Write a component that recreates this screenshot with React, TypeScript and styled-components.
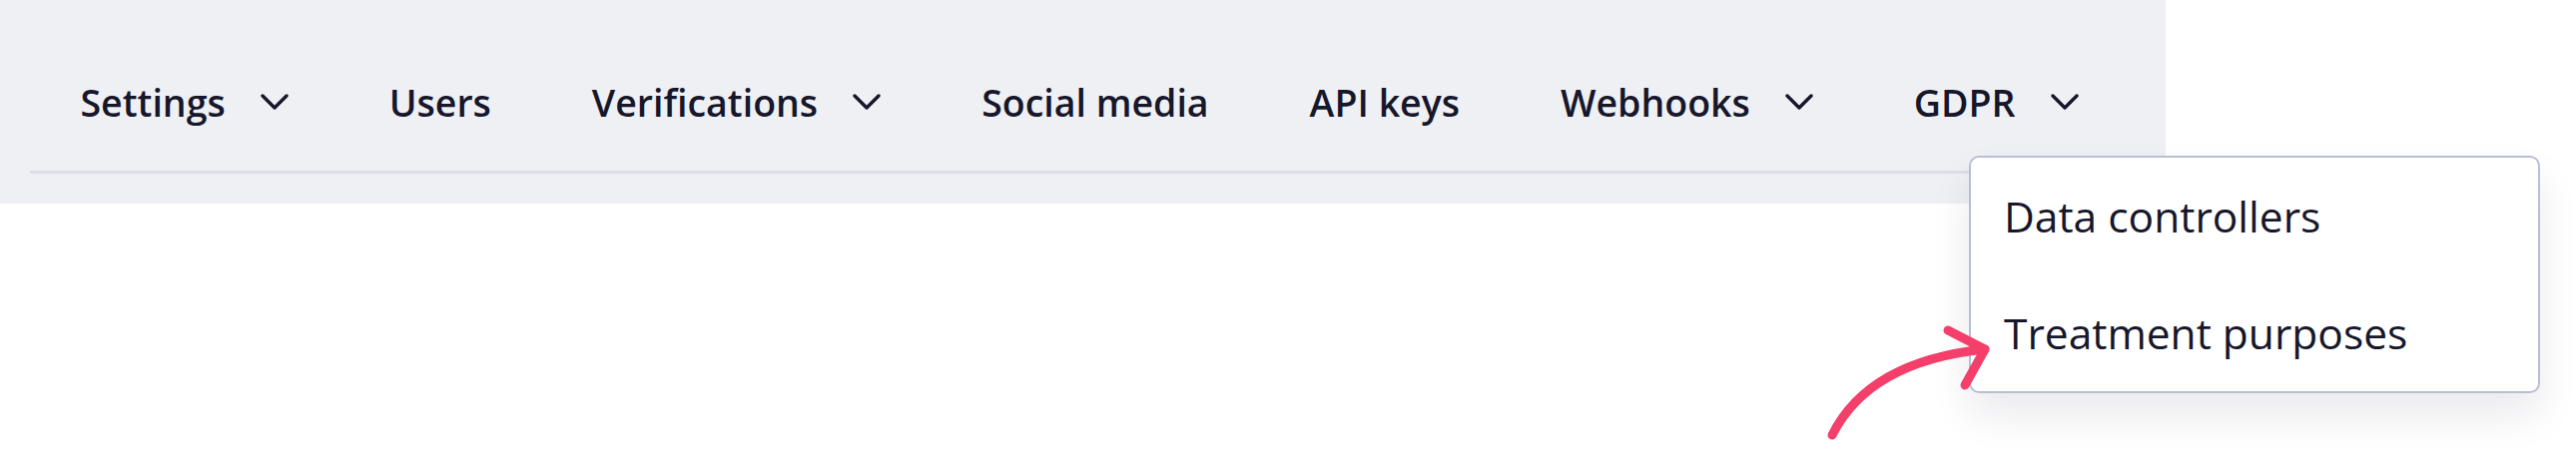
import React from "react";
import styled, { createGlobalStyle } from "styled-components";

const GlobalStyle = createGlobalStyle`
  html, body {
    margin: 0;
    padding: 0;
    background: #ffffff;
  }
  body {
    font-family: "Open Sans", "Noto Sans", sans-serif;
    color: #17172b;
  }
`;

const Page = styled.div`
  position: relative;
  width: 2580px;
  height: 468px;
  overflow: hidden;
`;

const Panel = styled.div`
  width: 2169px;
  box-sizing: border-box;
  background: #eff0f4;
  padding: 60px 30px 30px;
`;

const Nav = styled.nav`
  display: flex;
  align-items: center;
  height: 84px;
`;

const NavItem = styled.div`
  display: flex;
  align-items: center;
  gap: 35px;
  padding: 0 50.5px;
  font-size: 37.5px;
  font-weight: 600;
  white-space: nowrap;
  cursor: pointer;
`;

const Divider = styled.div`
  margin-top: 27px;
  height: 3px;
  background: #dddde9;
`;

const Dropdown = styled.div`
  position: absolute;
  left: 1972px;
  top: 156px;
  width: 572px;
  box-sizing: border-box;
  background: #ffffff;
  border: 2px solid #b8bfd5;
  border-radius: 10px;
  box-shadow: 0 22px 40px rgba(20, 20, 50, 0.09);
`;

const MenuItem = styled.div`
  display: flex;
  align-items: center;
  height: 117px;
  padding-left: 33px;
  font-size: 42.5px;
  font-weight: 400;
  white-space: nowrap;
`;

const Pointer = styled.svg`
  position: absolute;
  left: 1820px;
  top: 310px;
`;

const Chevron = () => (
  <svg width="28" height="17" viewBox="0 0 28 17" fill="none">
    <polyline
      points="2,2 14,14 26,2"
      stroke="#17172b"
      strokeWidth="3.4"
      strokeLinecap="round"
      strokeLinejoin="round"
    />
  </svg>
);

const items = [
  { label: "Settings", menu: true },
  { label: "Users", menu: false },
  { label: "Verifications", menu: true },
  { label: "Social media", menu: false },
  { label: "API keys", menu: false },
  { label: "Webhooks", menu: true },
  { label: "GDPR", menu: true },
];

export default function App() {
  return (
    <Page>
      <GlobalStyle />
      <Panel>
        <Nav>
          {items.map((it) => (
            <NavItem key={it.label}>
              {it.label}
              {it.menu && <Chevron />}
            </NavItem>
          ))}
        </Nav>
        <Divider />
      </Panel>
      <Dropdown>
        <MenuItem>Data controllers</MenuItem>
        <MenuItem>Treatment purposes</MenuItem>
      </Dropdown>
      <Pointer width="180" height="140" viewBox="0 0 180 140">
        <path
          d="M15 126 Q 52 52 168 40"
          stroke="#f43f6a"
          strokeWidth="9"
          fill="none"
          strokeLinecap="round"
        />
        <path
          d="M131 21 L168 40 L148 76"
          stroke="#f43f6a"
          strokeWidth="9"
          fill="none"
          strokeLinecap="round"
          strokeLinejoin="round"
        />
      </Pointer>
    </Page>
  );
}
